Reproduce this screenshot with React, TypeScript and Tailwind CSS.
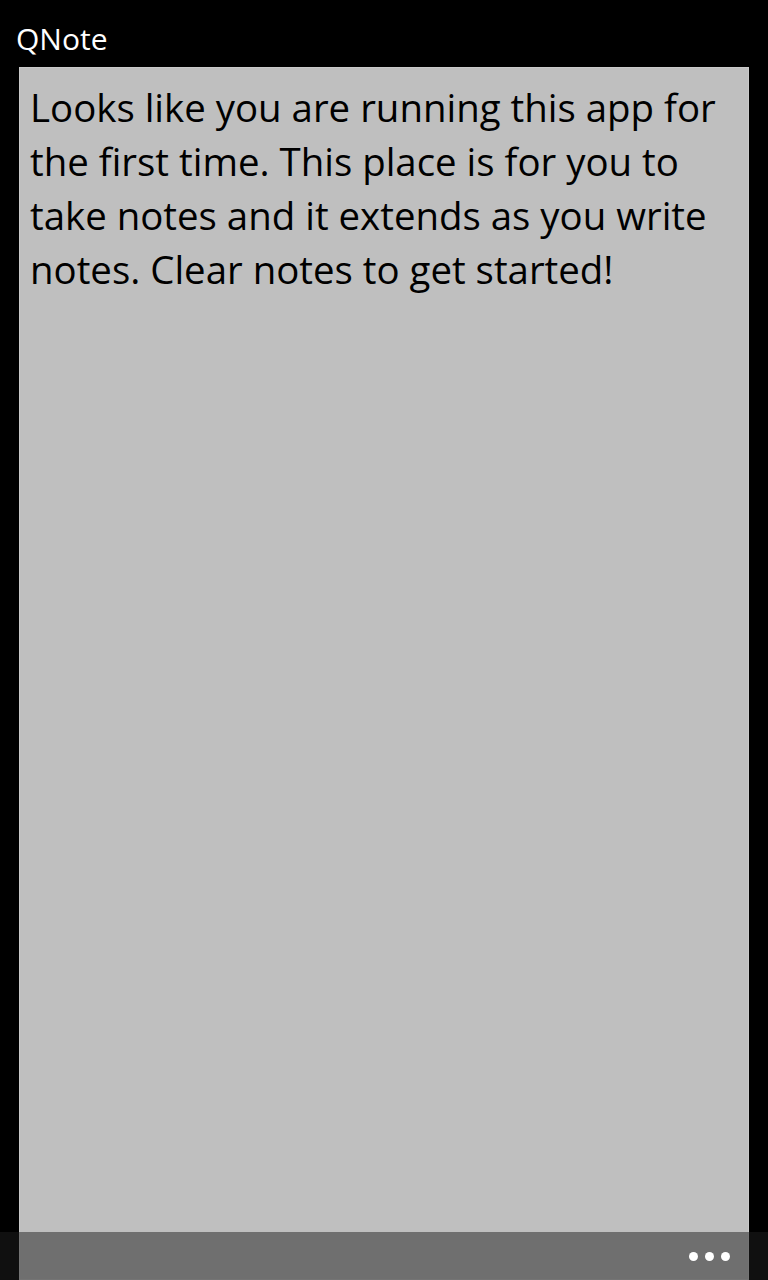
import React from 'react';

const lines = [
  'Looks like you are running this app for',
  'the first time. This place is for you to',
  'take notes and it extends as you write',
  'notes. Clear notes to get started!',
];

const AppBar = () => {
  return (
    <div className="absolute bottom-0 left-0 right-0 h-[48px] bg-[#202020]/50 flex items-center justify-end pr-[38px]">
      <div className="flex items-center gap-[7px]">
        <span className="block w-[9px] h-[9px] rounded-full bg-white" />
        <span className="block w-[9px] h-[9px] rounded-full bg-white" />
        <span className="block w-[9px] h-[9px] rounded-full bg-white" />
      </div>
    </div>
  );
};

export default function App() {
  return (
    <div
      className="relative w-[768px] h-[1280px] overflow-hidden bg-black flex flex-col"
      style={{ fontFamily: '"Open Sans", "Noto Sans", sans-serif' }}
    >
      <div className="h-[67px] shrink-0 pl-[16px] pt-[24px]">
        <h1 className="text-[30px] leading-none text-white font-normal">QNote</h1>
      </div>

      <div className="flex-1 ml-[19px] mr-[19px] bg-[#bfbfbf] border border-[#c9c9c9] pl-[10px] pt-[12px]">
        <div className="text-[38.4px] leading-[54px] text-black">
          {lines.map((line, index) => (
            <div key={index} className="whitespace-nowrap">
              {line}
            </div>
          ))}
        </div>
      </div>

      <AppBar />
    </div>
  );
}
